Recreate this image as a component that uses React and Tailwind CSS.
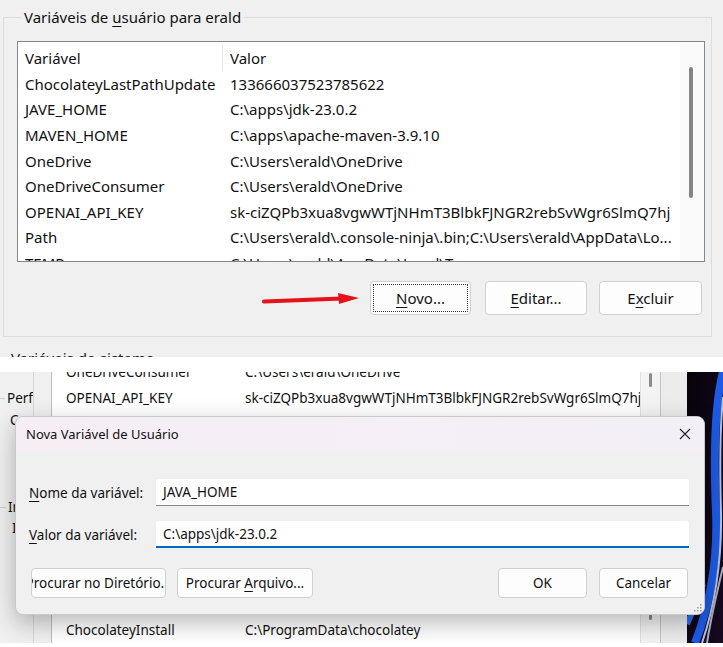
import React from "react";

const userVars = [
  ["ChocolateyLastPathUpdate", "133666037523785622"],
  ["JAVE_HOME", "C:\\apps\\jdk-23.0.2"],
  ["MAVEN_HOME", "C:\\apps\\apache-maven-3.9.10"],
  ["OneDrive", "C:\\Users\\erald\\OneDrive"],
  ["OneDriveConsumer", "C:\\Users\\erald\\OneDrive"],
  ["OPENAI_API_KEY", "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"],
  ["Path", "C:\\Users\\erald\\.console-ninja\\.bin;C:\\Users\\erald\\AppData\\Lo..."],
  ["TEMP", "C:\\Users\\erald\\AppData\\Local\\Temp"],
];

const Ul = ({ children }) => (
  <span className="underline underline-offset-[3px] decoration-1">{children}</span>
);

const RedArrow = () => (
  <svg width="98" height="16" viewBox="0 0 98 16">
    <path d="M2 11.5 L80 8.5" stroke="#e5121b" strokeWidth="4" strokeLinecap="round" fill="none" />
    <path d="M76 3 L97 8 L77 14 Z" fill="#e5121b" />
  </svg>
);

const Wallpaper = () => (
  <svg className="shrink-0" width="36" height="271" viewBox="0 0 36 271">
    <defs>
      <linearGradient id="wpbg" x1="0" y1="0" x2="1" y2="1">
        <stop offset="0" stopColor="#07030b" />
        <stop offset="1" stopColor="#170a22" />
      </linearGradient>
    </defs>
    <rect width="36" height="271" fill="url(#wpbg)" />
    <path d="M36 0 C27 35 27 95 29 140 C31 190 22 235 8 271" stroke="#1d5be6" strokeWidth="8" fill="none" />
    <path d="M36 25 C32 65 33 105 34 140 C35 190 27 235 15 271" stroke="#cfe0ff" strokeWidth="2" fill="none" opacity="0.85" />
    <path d="M0 252 C6 238 12 226 16 212" stroke="#2f7cff" strokeWidth="6" fill="none" opacity="0.9" />
    <path d="M36 195 C30 220 24 245 20 271" stroke="#e8f0ff" strokeWidth="2" fill="none" opacity="0.7" />
  </svg>
);

const WinButton = ({ children, className = "" }) => (
  <div
    className={`shrink-0 flex items-center justify-center rounded-[4px] border border-[#d0d0d0] bg-[#fdfdfd] ${className}`}
  >
    <span className="whitespace-nowrap">{children}</span>
  </div>
);

export default function App() {
  return (
    <div className="w-[723px] h-[647px] overflow-hidden bg-white text-[#111] font-['Noto_Sans',sans-serif]">
      {/* Top capture */}
      <div className="h-[357px] overflow-hidden bg-[#f0f0f0] pt-[7px] pl-[3px]">
        <fieldset className="w-[709px] h-[330px] border border-[#dcdcdc] pl-[13px]">
          <legend className="ml-[4px] px-[3px] text-[15px] leading-[20px]">
            Variáveis de <Ul>u</Ul>suário para erald
          </legend>
          <div className="mt-[14px] w-[688px] h-[221px] border border-[#828790] bg-white flex overflow-hidden">
            <div className="flex-1 min-w-0 text-[15px] leading-[20px]">
              <div className="h-[29px] flex items-center pt-[3px]">
                <div className="w-[205px] shrink-0 pl-[7px] h-full flex items-center border-r border-[#e5e5e5]">Variável</div>
                <div className="pl-[7px]">Valor</div>
              </div>
              {userVars.map(([name, value]) => (
                <div key={name} className="h-[25.6px] flex items-center whitespace-nowrap">
                  <div className="w-[205px] shrink-0 pl-[7px]">{name}</div>
                  <div className="pl-[7px] overflow-hidden">{value}</div>
                </div>
              ))}
            </div>
            <div className="w-[24px] shrink-0 bg-[#fafafa] pt-[25px] pl-[9px]">
              <div className="w-[4px] h-[131px] rounded-full bg-[#858585]" />
            </div>
          </div>
          <div className="mt-[19px] mr-[9px] flex items-center justify-end text-[15px]">
            <div className="mr-[10px]">
              <RedArrow />
            </div>
            <WinButton className="w-[101px] h-[34px] border-[#6aa6e0] outline-1 outline-dotted -outline-offset-4 outline-[#333]">
              <Ul>N</Ul>ovo...
            </WinButton>
            <WinButton className="w-[102px] h-[34px] ml-[14px]">
              <Ul>E</Ul>ditar...
            </WinButton>
            <WinButton className="w-[103px] h-[34px] ml-[12px]">
              E<Ul>x</Ul>cluir
            </WinButton>
          </div>
        </fieldset>
        <div className="mt-[11px] ml-[8px] text-[15px] leading-[20px] text-[#222]">Variáveis do sistema</div>
      </div>

      <div className="h-[15px] bg-white" />

      {/* Bottom capture */}
      <div className="relative h-[271px] overflow-hidden flex text-[13.5px] leading-[20px]">
        <div className="w-[34px] shrink-0 bg-[#f0f0f0] border-r border-[#d6d6d6] overflow-hidden whitespace-nowrap">
          <div className="mt-[16px] h-[20px] flex items-center">
            <div className="w-[5px] h-px bg-[#cfcfcf] shrink-0" />
            <span className="ml-[2px]">Perfis de usuário</span>
          </div>
          <div className="mt-[2px] h-[20px] pl-[10px]">Configurações</div>
          <div className="mt-[67px] h-[20px] flex items-center">
            <div className="w-[6px] h-px bg-[#cfcfcf] shrink-0" />
            <span className="ml-[2px]">Inicialização</span>
          </div>
          <div className="mt-[1px] h-[20px] pl-[12px]">Inicialização</div>
        </div>
        <div className="w-[18px] shrink-0 bg-[#f0f0f0] border-r border-[#bdbdbd]" />
        <div className="flex-1 min-w-0 overflow-hidden bg-white pl-[14px] flex flex-col">
          <div className="-mt-[13px]">
            {[
              ["OneDriveConsumer", "C:\\Users\\erald\\OneDrive"],
              ["OPENAI_API_KEY", "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"],
              ["Path", "C:\\Users\\erald\\.console-ninja\\.bin;C:\\Users\\erald\\AppData\\Lo..."],
            ].map(([name, value]) => (
              <div key={name} className="h-[25.8px] flex items-center whitespace-nowrap">
                <div className="w-[179px] shrink-0">{name}</div>
                <div className="overflow-hidden">{value}</div>
              </div>
            ))}
          </div>
          <div className="flex-1" />
          <div className="h-[26px] flex items-center whitespace-nowrap">
            <div className="w-[179px] shrink-0">ChocolateyInstall</div>
            <div>C:\ProgramData\chocolatey</div>
          </div>
        </div>
        <div className="w-[20px] shrink-0 bg-[#f3f3f3] border-l border-[#e0e0e0] flex flex-col items-center">
          <div className="mt-[1px] w-[3px] h-[14px] bg-[#8a8a8a] rounded-full" />
          <div className="flex-1" />
          <div className="mb-[23px] w-[3px] h-[6px] bg-[#8a8a8a] rounded-full" />
        </div>
        <div className="w-[27px] shrink-0 bg-[#ececec] border-l border-[#c4c4c4]" />
        <Wallpaper />

        {/* Dialog */}
        <div className="absolute left-[15px] top-[44px] w-[690px] h-[199px] rounded-[8px] overflow-hidden bg-[#f0f0f0] border border-[#c9c9c9] shadow-[0_8px_24px_rgba(0,0,0,0.28)] flex flex-col">
          <div className="h-[34px] shrink-0 flex items-center justify-between pl-[10px] pr-[13px] bg-gradient-to-r from-[#f7eef5] to-[#f3eff7]">
            <span className="text-[13px]">Nova Variável de Usuário</span>
            <svg width="12" height="12" viewBox="0 0 12 12">
              <path d="M1 1 L11 11 M11 1 L1 11" stroke="#222" strokeWidth="1.1" />
            </svg>
          </div>
          <div className="flex-1 relative px-[13px] pt-[28px]">
            <div className="flex items-center">
              <div className="w-[127px] shrink-0 whitespace-nowrap">
                <Ul>N</Ul>ome da variável:
              </div>
              <div className="flex-1 mr-[2px] h-[27px] bg-white rounded-t-[3px] border-b border-[#868686] flex items-center px-[7px]">
                JAVA_HOME
              </div>
            </div>
            <div className="mt-[15px] flex items-center">
              <div className="w-[127px] shrink-0 whitespace-nowrap">
                <Ul>V</Ul>alor da variável:
              </div>
              <div className="flex-1 mr-[2px] h-[27px] bg-white rounded-t-[3px] border-b-2 border-[#0067c0] flex items-center px-[7px]">
                C:\apps\jdk-23.0.2
              </div>
            </div>
            <div className="mt-[20px] flex items-center pl-[2px] pr-[3px]">
              <WinButton className="w-[135px] h-[30px] overflow-hidden">
                Procurar no Diretório...
              </WinButton>
              <WinButton className="w-[136px] h-[30px] ml-[11px]">
                Procurar <Ul>A</Ul>rquivo...
              </WinButton>
              <div className="flex-1" />
              <WinButton className="w-[89px] h-[30px]">OK</WinButton>
              <WinButton className="w-[89px] h-[30px] ml-[12px]">Cancelar</WinButton>
            </div>
            <svg className="absolute right-[2px] bottom-[2px]" width="8" height="8" viewBox="0 0 8 8">
              <g fill="#9a9a9a">
                <rect x="6" y="0" width="1.5" height="1.5" />
                <rect x="3" y="3" width="1.5" height="1.5" />
                <rect x="6" y="3" width="1.5" height="1.5" />
                <rect x="0" y="6" width="1.5" height="1.5" />
                <rect x="3" y="6" width="1.5" height="1.5" />
                <rect x="6" y="6" width="1.5" height="1.5" />
              </g>
            </svg>
          </div>
        </div>
      </div>

      <div className="h-[4px] bg-white" />
    </div>
  );
}
